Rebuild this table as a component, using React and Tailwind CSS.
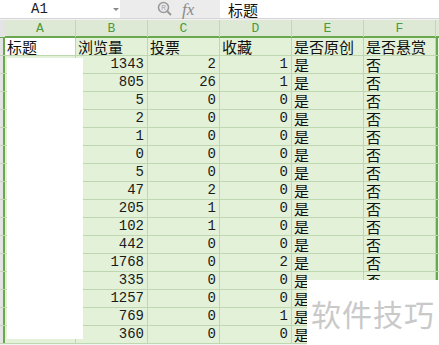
const rows = [
  [1343, 2, 1],
  [805, 26, 1],
  [5, 0, 0],
  [2, 0, 0],
  [1, 0, 0],
  [0, 0, 0],
  [5, 0, 0],
  [47, 2, 0],
  [205, 1, 0],
  [102, 1, 0],
  [442, 0, 0],
  [1768, 0, 2],
  [335, 0, 0],
  [1257, 0, 0],
  [769, 0, 1],
  [360, 0, 0],
];

const cols = ["A", "B", "C", "D", "E", "F"];
const heads = ["标题", "浏览量", "投票", "收藏", "是否原创", "是否悬赏"];

const cjk = "font-['Noto_Sans_CJK_SC',sans-serif]";
const mono = "font-['Liberation_Mono','Noto_Sans_CJK_SC',monospace]";

const grid = "grid grid-cols-[5px_71px_72px_72px_72px_72px_72px_3px]";

const App = () => {
  return (
    <div className="relative w-[439px] h-[345px] overflow-hidden bg-[#f3f3f3] select-none">
      {/* formula bar */}
      <div className="flex h-[19px] border-b border-[#d4d4d4]">
        <div className="relative w-[120px] bg-white">
          <span className={`absolute left-[31px] top-0 text-[14px] leading-[19px] text-[#222] ${mono}`}>A1</span>
          <span className="absolute left-[113px] top-[8px] w-0 h-0 border-l-[3px] border-r-[3px] border-t-[3px] border-l-transparent border-r-transparent border-t-[#888]" />
        </div>
        <div className="flex items-center w-[100px] bg-[#ececec] pl-[37px] gap-[9px]">
          <svg width="16" height="16" viewBox="0 0 16 16">
            <circle cx="6.5" cy="6.5" r="5" fill="none" stroke="#9a9a9a" strokeWidth="1.6" />
            <line x1="10" y1="10" x2="14" y2="14" stroke="#9a9a9a" strokeWidth="2" />
            <text x="6.5" y="9" fontSize="6.5" textAnchor="middle" fill="#9a9a9a" fontFamily="Liberation Sans">R</text>
          </svg>
          <span className="text-[17px] leading-[19px] italic text-[#8a8a8a] font-['Liberation_Serif',serif]">fx</span>
        </div>
        <div className={`flex-1 bg-white pl-[8px] text-[15px] leading-[19px] text-[#111] ${cjk}`}>标题</div>
      </div>

      {/* column headers */}
      <div className={`${grid} h-[18px] mt-[1px] bg-[#dde9d5] border-b-[2px] border-[#6aa84f]`}>
        <div className="bg-[#e4e4e4]" />
        {cols.map((c) => (
          <div
            key={c}
            className={`border-r border-[#c3d6b8] text-center text-[13px] leading-[17px] text-[#4c9a3c] ${mono}`}
          >
            {c}
          </div>
        ))}
        <div />
      </div>

      {/* header row */}
      <div className={`${grid} h-[18px] border-b border-[#bfd7b0]`}>
        <div className="bg-[#e4e4e4] border-r-[2px] border-[#6aa84f]" />
        {heads.map((h, i) => (
          <div
            key={h}
            className={`border-r border-[#bfd7b0] px-[2px] text-[15px] leading-[17px] text-[#111] whitespace-nowrap ${cjk} ${
              i === 0 ? "bg-white" : "bg-[#e3f1d9]"
            }`}
          >
            {h}
          </div>
        ))}
        <div className="border-l-[2px] border-[#6aa84f] bg-[#eef4ea]" />
      </div>

      {/* data rows */}
      {rows.map((r, i) => (
        <div key={i} className={`${grid} h-[18px] border-b border-[#bfd7b0]`}>
          <div className="bg-[#e4e4e4] border-r-[2px] border-[#6aa84f]" />
          <div className="bg-[#e3f1d9] border-r border-[#bfd7b0]" />
          {r.map((v, j) => (
            <div
              key={j}
              className={`bg-[#e3f1d9] border-r border-[#bfd7b0] pr-[3px] text-right text-[14px] leading-[17px] text-[#1a1a1a] ${mono}`}
            >
              {v}
            </div>
          ))}
          <div className={`bg-[#e3f1d9] border-r border-[#bfd7b0] px-[2px] text-[15px] leading-[17px] text-[#111] ${cjk}`}>是</div>
          <div className={`bg-[#e3f1d9] border-r border-[#bfd7b0] px-[2px] text-[15px] leading-[17px] text-[#111] ${cjk}`}>否</div>
          <div className="border-l-[2px] border-[#6aa84f] bg-[#eef4ea]" />
        </div>
      ))}

      {/* redacted title column */}
      <div className="absolute left-[7px] top-[58px] w-[76px] h-[281px] bg-white" />

      {/* watermark */}
      <div className="absolute left-[307px] top-[280px] w-[132px] h-[65px] bg-white flex items-center justify-center">
        <span className={`text-[30px] leading-none text-[#c9c9c9] tracking-[1px] ${cjk}`}>软件技巧</span>
      </div>
    </div>
  );
};

export default App;
